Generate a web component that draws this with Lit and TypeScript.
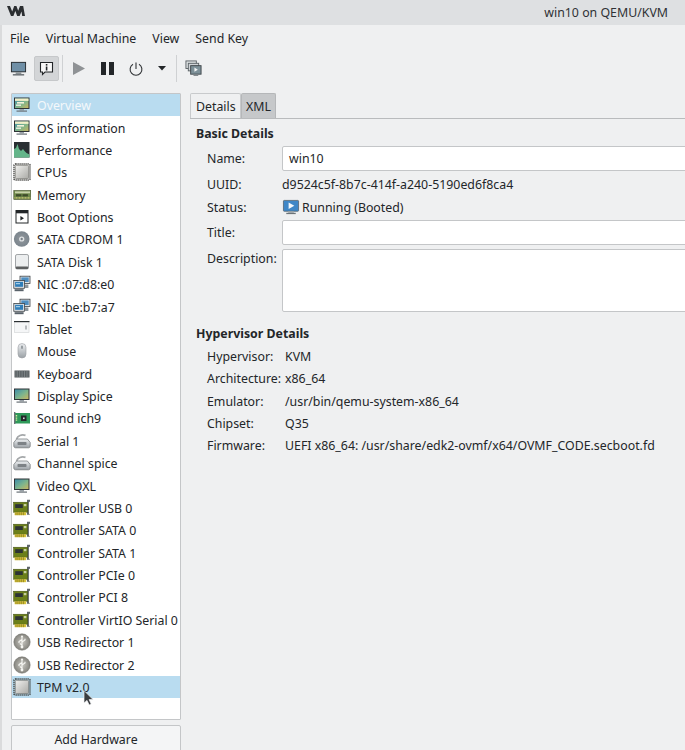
import { LitElement, html, css, svg } from "lit";
import { customElement } from "lit/decorators.js";

const defs = svg`<defs>
  <linearGradient id="screen" x1="0" y1="0" x2="1" y2="1"><stop offset="0" stop-color="#3f8fa8"/><stop offset=".55" stop-color="#7fb58c"/><stop offset="1" stop-color="#c8b560"/></linearGradient>
  <linearGradient id="chip" x1="0" y1="0" x2="1" y2="1"><stop offset="0" stop-color="#f1f1ef"/><stop offset="1" stop-color="#a9a9a5"/></linearGradient>
  <linearGradient id="metal" x1="0" y1="0" x2="0" y2="1"><stop offset="0" stop-color="#eef0f2"/><stop offset="1" stop-color="#9aa0a5"/></linearGradient>
  <radialGradient id="disc"><stop offset="0" stop-color="#d5d8da"/><stop offset=".3" stop-color="#8b9298"/><stop offset="1" stop-color="#7b858d"/></radialGradient>
  <radialGradient id="usb"><stop offset="0" stop-color="#c9c8c2"/><stop offset="1" stop-color="#85847e"/></radialGradient>
</defs>`;

const monitor = (top = false) => svg`
  <rect x="1" y="1.5" width="15.5" height="11.5" fill="#2e3336"/>
  <rect x="2" y="2.5" width="13.5" height="9.5" fill="url(#screen)"/>
  ${top ? svg`<rect x="2" y="2.5" width="13.5" height="2.4" fill="#f2efc8"/><rect x="4" y="6" width="7" height="1.6" fill="#f4f2d8"/><rect x="3" y="8.5" width="5" height="1.4" fill="#eef0e0"/>` : ""}
  <rect x="6.5" y="13" width="4.5" height="1.5" fill="#9aa2a8"/>
  <rect x="3.5" y="14.5" width="10.5" height="1.2" fill="#6b7378"/>`;

const chip = svg`
  <rect x="1" y="1" width="16" height="16" rx="1.5" fill="none" stroke="#3c3c38" stroke-width="1.7" stroke-dasharray="1.2 .8"/>
  <rect x="2.3" y="2.3" width="13.4" height="13.4" rx="1.2" fill="url(#chip)" stroke="#5c5c58" stroke-width=".6"/>`;

const pci = svg`
  <path d="M14 .8h3v1.6l-1.1.9v11.2l1.1 1.3H14z" fill="#5f656a"/>
  <rect x=".6" y="3.2" width="14" height="10" fill="#6b7f1a" stroke="#3c4a10" stroke-width=".5"/>
  <rect x="2.2" y="5.2" width="7.6" height="3.8" fill="#2c3234"/>
  <rect x="10.8" y="5" width="2.6" height="2.2" fill="#c7cfa0"/>
  <path d="M1.6 13.2h11.6v3H1.6z" fill="#d8c43a"/>
  <path d="M3 13.2v3M4.9 13.2v3M6.8 13.2v3M8.7 13.2v3M10.6 13.2v3" stroke="#6e6418" stroke-width=".6"/>`;

const nic = svg`
  <rect x="7" y="1.2" width="10" height="7.2" fill="#dfe3e6" stroke="#3c4246" stroke-width=".8"/>
  <rect x="8.3" y="2.4" width="7.4" height="4.6" fill="#4f8ec0"/>
  <rect x=".8" y="5.5" width="10.6" height="7.8" fill="#dfe3e6" stroke="#3c4246" stroke-width=".8"/>
  <rect x="2.1" y="6.8" width="8" height="5" fill="#2f7db8"/>
  <rect x="3" y="8.2" width="4" height="1" fill="#bfe0f2"/>
  <rect x="1.6" y="14.2" width="9" height="2" fill="#59626a"/>
  <path d="M12 9.5h3.4v3.5H12z" fill="#8d959b"/>`;

const serial = svg`
  <path d="M3.5 7c1.2-3.2 5-5 9-3.6" fill="none" stroke="#a5a8aa" stroke-width="1.7"/>
  <path d="M.8 10.5 3.6 7h10.8l2.8 3.5v3.6c0 1-.8 1.7-1.7 1.7H2.5c-.9 0-1.7-.7-1.7-1.7z" fill="url(#metal)" stroke="#6e7276" stroke-width=".7"/>
  <rect x="4.5" y="10" width="9" height="3" rx=".7" fill="#7d8286"/>`;

const icons: Record<string, unknown> = {
  overview: monitor(true),
  perf: svg`<rect x="1" y="1" width="15.5" height="15.5" fill="#2a2f33"/><path d="M1 16.5V8l2-1 1.5-4 1.5 5 2 2 2-2 1.5 2 2 2 3 1.5v3z" fill="#64b58a"/>`,
  chip,
  memory: svg`<rect x=".8" y="4.5" width="17" height="9" fill="#6f8a4a" stroke="#46502e" stroke-width=".6"/><rect x="2" y="5.4" width="15" height="1.9" fill="#c9d2ab"/><rect x="3" y="8.2" width="5.4" height="2.2" fill="#3e4a2a"/><rect x="9.5" y="8.2" width="5.4" height="2.2" fill="#3e4a2a"/><path d="M1.5 11.8h15.8" stroke="#cfc477" stroke-width="1.3" stroke-dasharray="1 .5"/>`,
  boot: svg`<rect x="3" y="2.5" width="12" height="12.5" fill="#fff" stroke="#232629" stroke-width="1"/><rect x="3" y="2.5" width="12" height="2.8" fill="#232629"/><path d="M7.4 8v4.4l3.6-2.2z" fill="#232629"/>`,
  cdrom: svg`<circle cx="8.7" cy="9" r="7.8" fill="url(#disc)"/><circle cx="8.7" cy="9" r="2.6" fill="#dfe2e4"/><circle cx="8.7" cy="9" r="1.2" fill="#7a8289"/>`,
  disk: svg`<rect x="2.5" y="1.5" width="13" height="14.5" rx="1.6" fill="#eceeef" stroke="#8b8f92" stroke-width=".8"/><rect x="2.8" y="13.4" width="12.4" height="2.6" rx=".8" fill="#5d5f60"/>`,
  nic,
  tablet: svg`<rect x="1.5" y="1.5" width="14.5" height="11" fill="#f5f6f7" stroke="#cfd2d4" stroke-width=".6"/><rect x="1" y="1" width="15.5" height="1.2" fill="#2b3033"/><rect x="12.5" y="5.5" width="1" height="4" fill="#7a7f84"/>`,
  mouse: svg`<rect x="5" y="1.5" width="8" height="14.5" rx="4" fill="url(#metal)" stroke="#9a9ea2" stroke-width=".6"/><rect x="8.4" y="3.4" width="1.2" height="3.4" rx=".6" fill="#6a7278"/>`,
  keyboard: svg`<rect x="1.5" y="5.5" width="15" height="7" fill="#4e5457"/><path d="M2.5 7h13M2.5 9h13M2.5 11h13" stroke="#a8b0b2" stroke-width="1" stroke-dasharray="1 .7"/>`,
  display: monitor(),
  sound: svg`<rect x="2" y="4" width="15" height="10.5" fill="#2f9a5a"/><rect x="8" y="6.5" width="5.5" height="5.5" fill="#24282a"/><rect x="1" y="3" width="1.4" height="12" fill="#6a7075"/><path d="M3.5 6v6" stroke="#d6e8a0" stroke-width="1.4" stroke-dasharray="1 .6"/><rect x="10" y="8.5" width="1.6" height="1.6" fill="#d8dadb"/>`,
  serial,
  pci,
  usb: svg`<circle cx="9" cy="9" r="8.2" fill="url(#usb)" stroke="#6b6a65" stroke-width=".5"/><path d="M9 3v11M9 6.5 6 8.5v1.5M9 9l3-2V5.8M9 12 6.8 10.5" fill="none" stroke="#f6f6f2" stroke-width="1.1"/><circle cx="9" cy="14" r="1.4" fill="#f6f6f2"/><path d="M9 2 7.6 4.2h2.8z" fill="#f6f6f2"/>`,
};

const items: [string, string][] = [
  ["overview", "Overview"], ["overview", "OS information"], ["perf", "Performance"], ["chip", "CPUs"],
  ["memory", "Memory"], ["boot", "Boot Options"], ["cdrom", "SATA CDROM 1"], ["disk", "SATA Disk 1"],
  ["nic", "NIC :07:d8:e0"], ["nic", "NIC :be:b7:a7"], ["tablet", "Tablet"], ["mouse", "Mouse"],
  ["keyboard", "Keyboard"], ["display", "Display Spice"], ["sound", "Sound ich9"], ["serial", "Serial 1"],
  ["serial", "Channel spice"], ["display", "Video QXL"], ["pci", "Controller USB 0"], ["pci", "Controller SATA 0"],
  ["pci", "Controller SATA 1"], ["pci", "Controller PCIe 0"], ["pci", "Controller PCI 8"],
  ["pci", "Controller VirtIO Serial 0"], ["usb", "USB Redirector 1"], ["usb", "USB Redirector 2"], ["chip", "TPM v2.0"],
];

@customElement("app-root")
export class AppRoot extends LitElement {
  static styles = css`
    :host {
      display: flex; flex-direction: column; position: relative; width: 685px; height: 750px; overflow: hidden;
      background: #eff0f1; color: #232629;
      font: 12.35px/18px "Noto Sans", sans-serif;
    }
    .title {
      height: 25px; flex: none; background: #dee0e2; display: flex; align-items: center;
      justify-content: space-between; padding: 0 17px 0 7px; box-sizing: border-box;
    }
    .title span { color: #2f3235; }
    .logo { margin-bottom: 3px; }
    .body { flex: 1; border-left: 2px solid #dadbdc; }
    .menu { height: 27px; box-sizing: border-box; display: flex; align-items: center; gap: 16px; padding: 0 0 0 8px; }
    .tools { height: 33px; display: flex; align-items: center; padding: 0 0 0 8px; box-sizing: border-box; }
    .tools svg { display: block; flex: none; }
    .active { width: 25px; height: 25px; background: #d3d5d7; border: 1px solid #c6c8ca; box-sizing: border-box; border-radius: 2px; display: flex; align-items: center; justify-content: center; margin: 0 3px 0 7px; }
    .sep { width: 1px; height: 27px; background: #cfd1d3; }
    .s1 { margin-right: 10px; } .s2 { margin-right: 16px; } .s3 { margin-right: 15px; } .s4 { margin-right: 15px; } .s5 { margin-right: 10px; } .s6 { margin-right: 8px; }
    .main { display: grid; grid-template-columns: 170px 1fr; column-gap: 9px; padding: 8px 0 0 9px; }
    .side { display: flex; flex-direction: column; gap: 5px; }
    .list { height: 627px; box-sizing: border-box; background: #fff; border: 1px solid #c4c6c8; border-radius: 1px; }
    .row { height: 22.385px; display: flex; align-items: center; gap: 6px; padding-left: 1px; white-space: nowrap; overflow: hidden; }
    .row svg { flex: none; }
    .row span { padding-top: 2px; }
    .row.sel { background: #b9dcf0; }
    .row.light { color: #f4f8fb; }
    .add {
      height: 30px; background: #f4f5f6; border: 1px solid #c4c6c8; border-radius: 2px; box-sizing: border-box;
      display: flex; align-items: center; justify-content: center;
    }
    .tabs { display: flex; height: 26px; box-sizing: border-box; border-bottom: 1px solid #b9bbbd; }
    .tab { height: 25px; box-sizing: border-box; padding: 4px 5px 0; border: 1px solid #c8cacc; border-bottom: 0; border-radius: 2px 2px 0 0; }
    .tab.on { width: 51px; background: #eff0f1; }
    .tab.off { width: 35px; background: #c6c8ca; border-color: #b5b7b9; padding-left: 4px; }
    .panel { padding-left: 6px; }
    h3 { font: 700 12.35px/18px "Noto Sans", sans-serif; margin: 0; }
    .h1 { padding-top: 6px; }
    .form { display: grid; grid-template-columns: 75px 500px; grid-template-rows: 25px 26px 23px 25px 68px; padding: 3px 0 0 11px; align-items: center; }
    .input { height: 25px; background: #fff; border: 1px solid #c4c6c8; border-radius: 2px; box-sizing: border-box; padding: 3px 0 0 6px; }
    .down { padding-top: 2px; }
    .shift { margin-bottom: 2px; }
    .status { display: flex; align-items: center; gap: 2px; }
    .status svg { flex: none; }
    .dlab { align-self: start; margin-top: 5px; }
    .desc { align-self: start; margin-top: 4px; height: 63px; background: #fff; border: 1px solid #c4c6c8; border-radius: 2px; box-sizing: border-box; }
    .h2 { padding-top: 12px; }
    .hyp { display: grid; grid-template-columns: 78px 1fr; grid-auto-rows: 22.3px; padding: 3px 0 0 11px; align-items: center; white-space: nowrap; }
    .cursor { position: absolute; left: 83px; top: 690px; }
  `;

  private icon(name: string) {
    return html`<svg width="18" height="18" viewBox="0 0 18 18">${icons[name]}</svg>`;
  }

  render() {
    return html`
      <svg width="0" height="0" class="cursor">${defs}</svg>
      <div class="title">
        <svg class="logo" width="18" height="10" viewBox="0 0 18 10"><path d="M0 0h3l2.2 5.6L7.2 0h2.2l1.8 4.8L13 0h3.2L18 10h-2.8l-.7-4.6L12.6 10h-2.4L8.3 5 6.4 10H4z" fill="#2b2e31"/></svg>
        <span>win10 on QEMU/KVM</span>
      </div>
      <div class="body">
      <div class="menu"><span>File</span><span>Virtual Machine</span><span>View</span><span>Send Key</span></div>
      <div class="tools">
        <svg width="17" height="17" viewBox="0 0 18 18"><rect x="1" y="2" width="16" height="11" fill="#2c3134"/><rect x="2" y="3" width="14" height="9" fill="#6f8fa6"/><rect x="6" y="13" width="6" height="2" fill="#8b9296"/><rect x="3" y="15" width="12" height="1.4" fill="#5a6266"/></svg>
        <div class="active"><svg width="15" height="15" viewBox="0 0 15 15"><path d="M1.5 1.5h12v9.5H6l-2.5 2.5V11h-2z" fill="#f8f8f8" stroke="#232629" stroke-width="1.1"/><rect x="6.8" y="3" width="1.6" height="1.6" fill="#232629"/><rect x="6.8" y="5.5" width="1.6" height="4" fill="#232629"/></svg></div>
        <div class="sep s1"></div>
        <svg class="s2" width="12" height="13" viewBox="0 0 12 13"><path d="M0 0l12 6.5L0 13z" fill="#8f9295"/></svg>
        <svg class="s3" width="13" height="13" viewBox="0 0 13 13"><rect x="0" y="0" width="5" height="13" fill="#232629"/><rect x="8" y="0" width="5" height="13" fill="#232629"/></svg>
        <svg class="s4" width="14" height="14" viewBox="0 0 14 14"><path d="M4 2.2a5.9 5.9 0 1 0 6 0" fill="none" stroke="#2f3235" stroke-width="1.1"/><path d="M7 .5v6.5" stroke="#2f3235" stroke-width="1.1"/></svg>
        <svg class="s5" width="8" height="5" viewBox="0 0 8 5"><path d="M0 0h8L4 4.5z" fill="#232629"/></svg>
        <div class="sep s6"></div>
        <svg width="17" height="17" viewBox="0 0 18 18"><rect x="1" y="1" width="11" height="8" fill="#dfe2e4" stroke="#5c6367"/><rect x="3.5" y="3.5" width="11" height="8" fill="#cfd3d6" stroke="#5c6367"/><rect x="6" y="6" width="11" height="9" fill="#7d9098" stroke="#3f474b"/><path d="M10 8v4.4l3.6-2.2z" fill="#f2f4f5"/><rect x="9" y="15.5" width="5" height="1.4" fill="#80878b"/></svg>
      </div>
      <div class="main">
        <div class="side">
          <div class="list">
            ${items.map(([ic, label], i) => html`<div class="row ${i === 0 || i === 26 ? "sel" : ""} ${i === 0 ? "light" : ""}">${this.icon(ic)}<span>${label}</span></div>`)}
          </div>
          <div class="add">Add Hardware</div>
        </div>
        <div>
          <div class="tabs"><div class="tab on">Details</div><div class="tab off">XML</div></div>
          <div class="panel">
            <h3 class="h1">Basic Details</h3>
            <div class="form">
              <span>Name:</span><div class="input">win10</div>
              <span class="down">UUID:</span><div class="down">d9524c5f-8b7c-414f-a240-5190ed6f8ca4</div>
              <span class="shift">Status:</span><div class="status shift">
                <svg width="18" height="17" viewBox="0 0 18 18"><rect x="1" y="1.5" width="16" height="11.5" rx=".8" fill="#3f87c7" stroke="#52606a" stroke-width=".8"/><path d="M6.5 3.8v6.8l6-3.4z" fill="#f4f8fb"/><rect x="6" y="13" width="6" height="1.6" fill="#a2a8ac"/><rect x="4" y="14.6" width="10" height="1.4" fill="#6b7378"/></svg>
                <span>Running (Booted)</span></div>
              <span>Title:</span><div class="input"></div>
              <span class="dlab">Description:</span><div class="desc"></div>
            </div>
            <h3 class="h2">Hypervisor Details</h3>
            <div class="hyp">
              <span>Hypervisor:</span><span>KVM</span>
              <span>Architecture:</span><span>x86_64</span>
              <span>Emulator:</span><span>/usr/bin/qemu-system-x86_64</span>
              <span>Chipset:</span><span>Q35</span>
              <span>Firmware:</span><span>UEFI x86_64: /usr/share/edk2-ovmf/x64/OVMF_CODE.secboot.fd</span>
            </div>
          </div>
        </div>
      </div>
      </div>
      <svg class="cursor" width="11" height="16" viewBox="0 0 11 16"><path d="M1 .5v12.5l3-2.6 2.2 4.6 2-1-2.1-4.4h4z" fill="#3a3d40" stroke="#f4f5f6" stroke-width=".7"/></svg>
    `;
  }
}
